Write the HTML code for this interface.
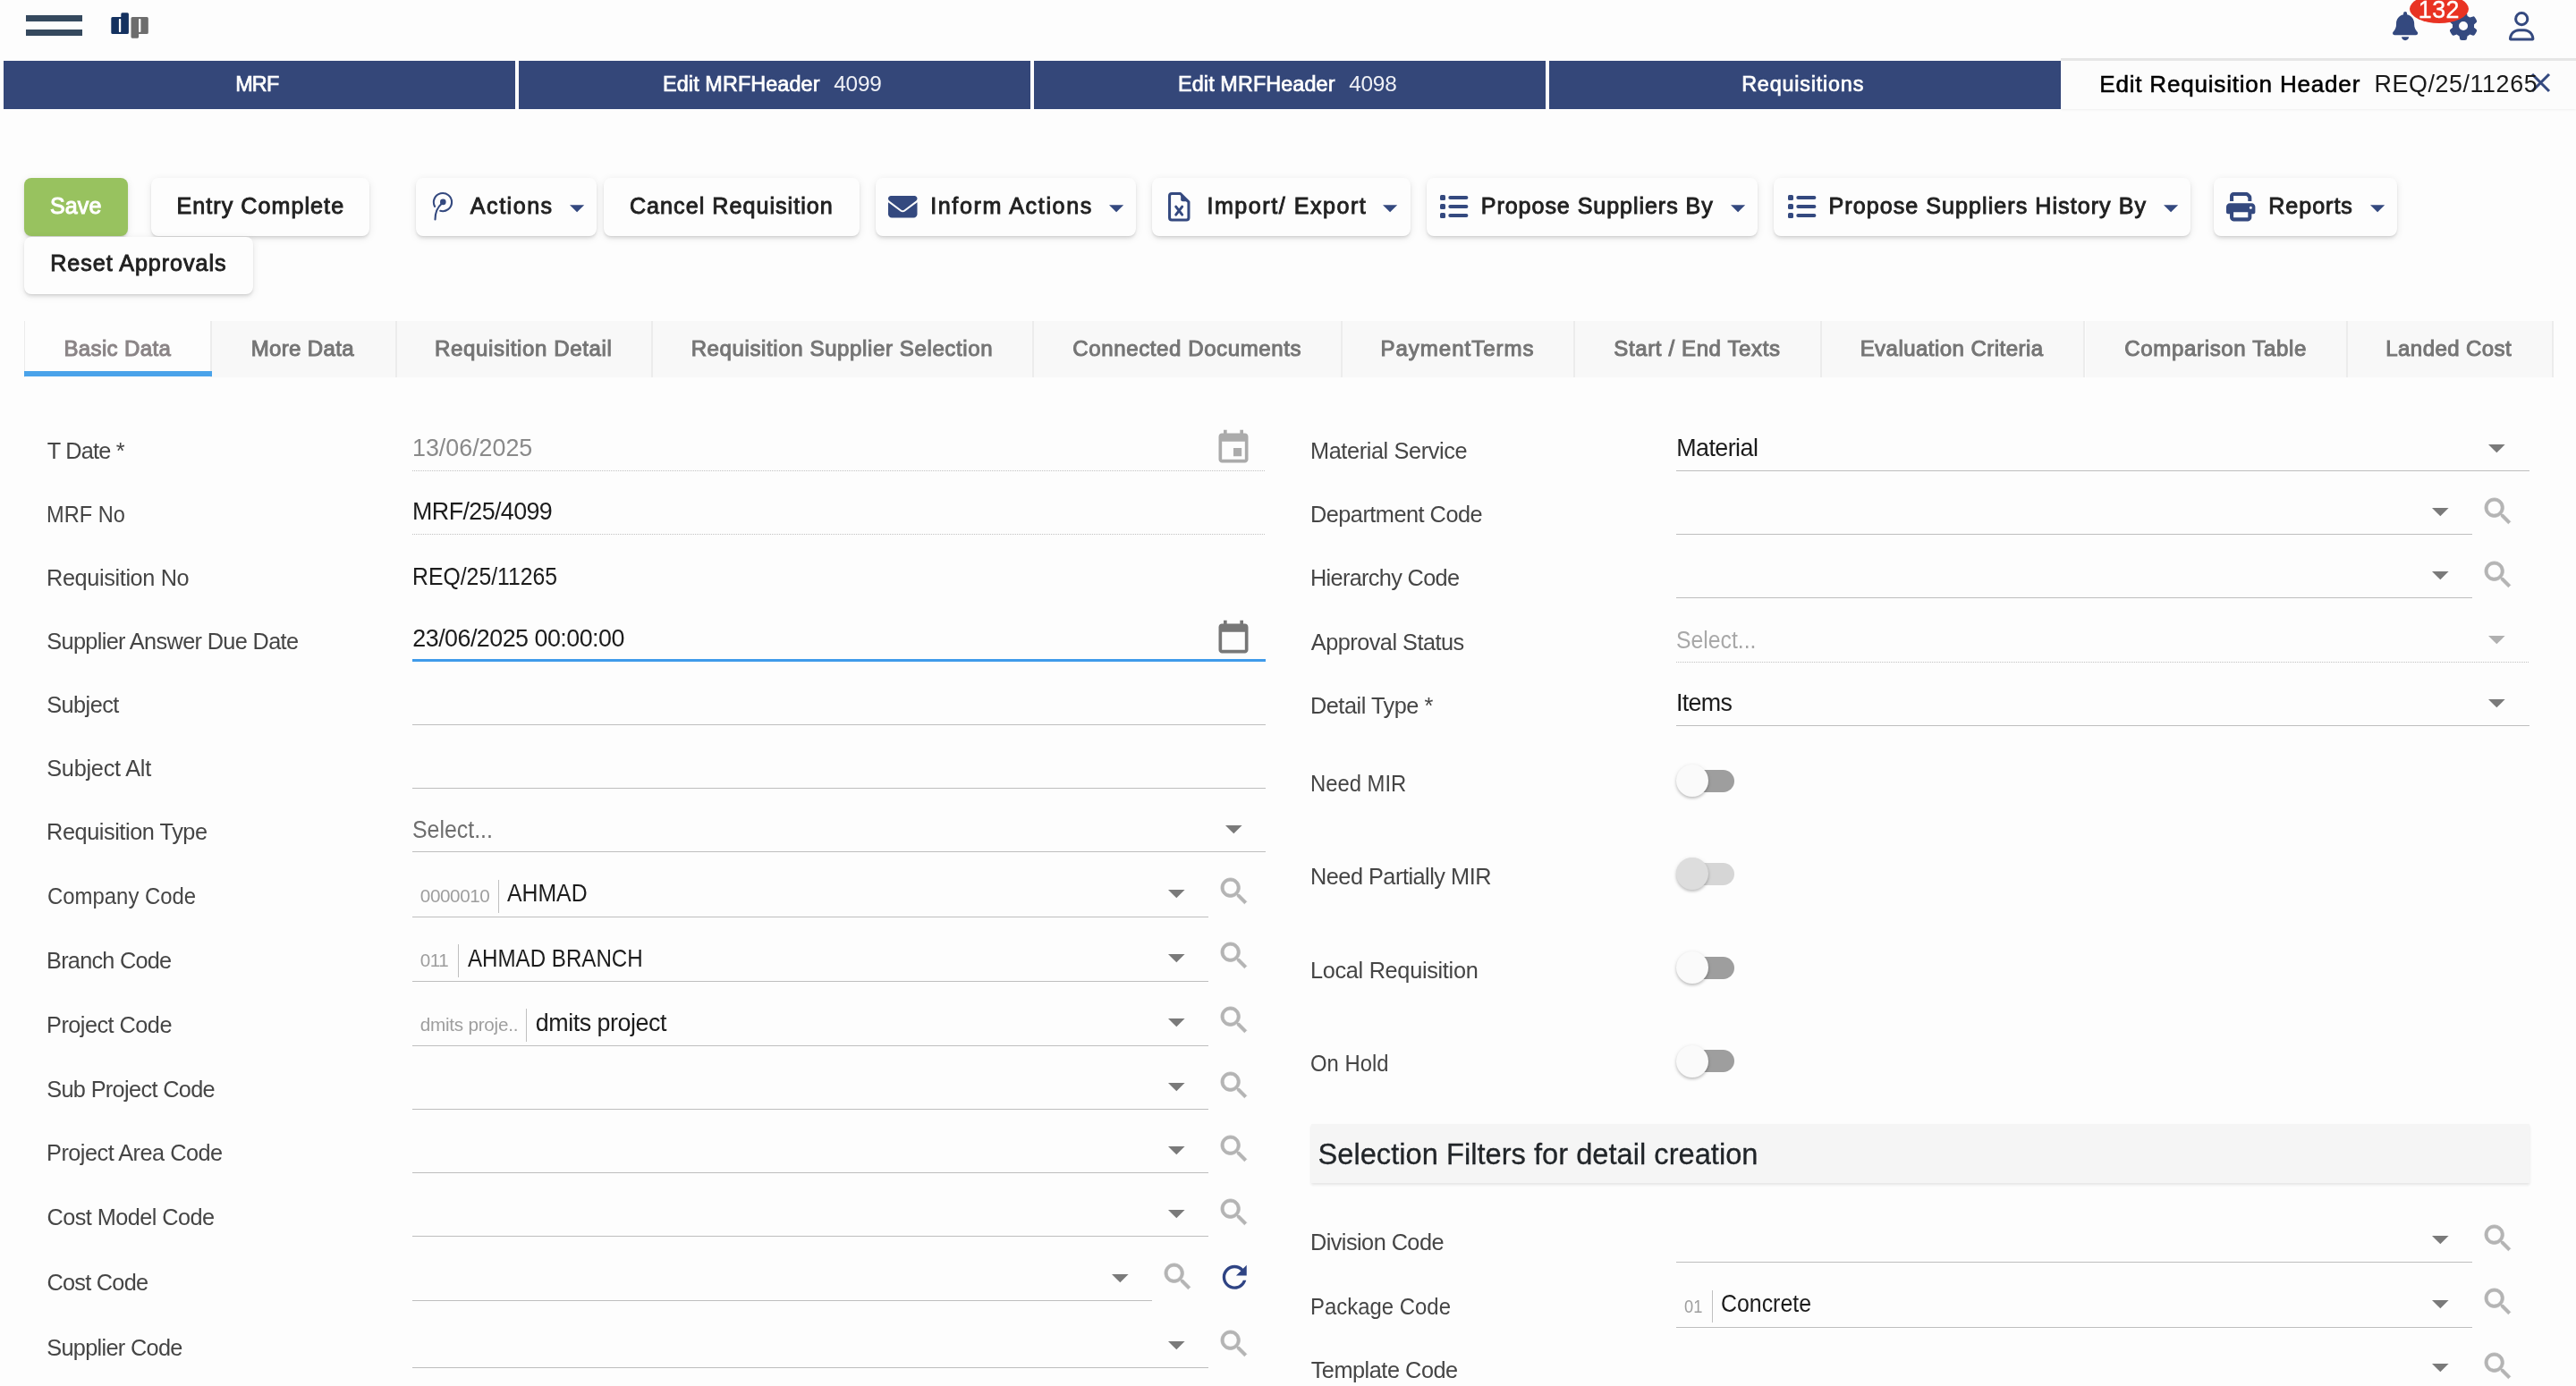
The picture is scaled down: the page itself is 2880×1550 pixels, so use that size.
<!DOCTYPE html>
<html lang="en">
<head>
<meta charset="utf-8">
<title>Edit Requisition Header</title>
<style>
html,body{margin:0;padding:0}
body{width:2880px;height:1550px;position:relative;overflow:hidden;background:#fdfdfd;font-family:"Liberation Sans",sans-serif}
.a{position:absolute}
.t{position:absolute;white-space:pre;line-height:60px;height:60px;font-family:"Liberation Sans",sans-serif}
.wt{position:absolute;top:68px;height:54px;background:#344779}
.btn{position:absolute;top:199px;height:65px;background:#fdfdfd;border-radius:8px;box-shadow:0 2px 10px rgba(0,0,0,.09),0 3px 3px rgba(0,0,0,.07),0 1px 1px rgba(0,0,0,.05)}
.st{position:absolute;top:359px;height:62.6px;background:#f8f8f8;border-right:2px solid #ececec;box-sizing:border-box}
.ul{position:absolute;height:1px;background:#bebebe}
.dl{position:absolute;height:1px;background:repeating-linear-gradient(90deg,#c2c2c2 0,#c2c2c2 1px,transparent 1px,transparent 2px)}
.sep{position:absolute;width:1px;background:#c0c0c0}
svg{position:absolute;overflow:visible}
.tr{position:absolute;width:62px;height:25px;border-radius:13px;background:#9e9e9e}
.th{position:absolute;width:36px;height:36px;border-radius:50%;background:#fafafa;box-shadow:0 2px 3px rgba(0,0,0,.18),0 1px 5px rgba(0,0,0,.10)}
</style>
</head>
<body>
<div class="a" style="left:29px;top:17px;width:63px;height:7px;background:#35495e;"></div>
<div class="a" style="left:29px;top:33px;width:63px;height:7px;background:#35495e;"></div>
<svg style="left:124px;top:14px" width="44" height="30" viewBox="0 0 44 30" ><path d="M1.8 5H11.300V1.800Q11.300 .3 12.800 .3H18.400Q19.900 .3 19.900 1.800V22.400Q19.900 24.100 18.200 24.100H2Q.3 24.100 .3 22.400V6.500Q.3 5 1.800 5Z" fill="#14315f"/><rect x="8.9" y="6.900" width="2.300" height="15.100" rx=".8" fill="#fff"/><path d="M24 5H40.300Q41.800 5 41.800 6.500V22.400Q41.800 24.100 40.100 24.100H31.100V27.300Q31.100 28.700 29.700 28.700H23.900Q22.500 28.700 22.500 27.300V6.500Q22.500 5 24 5Z" fill="#6d6d6d"/><rect x="31.1" y="6.900" width="2.300" height="15.100" rx=".8" fill="#fff"/></svg>
<svg style="left:2675px;top:13px" width="28.2" height="32.2" viewBox="0 0 448 512" ><path d="M224 0c-17.7 0-32 14.3-32 32V51.2C119 66 64 130.6 64 208v18.800c0 47-17.300 92.400-48.500 127.600l-7.400 8.300c-8.400 9.400-10.400 22.900-5.300 34.400S19.400 416 32 416H416c12.600 0 24-7.400 29.200-18.900s3.100-25-5.300-34.400l-7.400-8.300C401.300 319.200 384 273.900 384 226.800V208c0-77.400-55-142-128-156.800V32c0-17.700-14.300-32-32-32zm45.300 493.300c12-12 18.700-28.300 18.700-45.300H224 160c0 17 6.700 33.300 18.700 45.300s28.300 18.700 45.300 18.700s33.300-6.700 45.300-18.700z" fill="#34497f"/></svg>
<svg style="left:2738.0px;top:13.0px" width="32.1" height="32.1" viewBox="0 0 512 512" ><path d="M495.9 166.6c3.2 8.7 .5 18.4-6.4 24.6l-43.3 39.4c1.1 8.3 1.7 16.8 1.7 25.400s-.6 17.100-1.700 25.400l43.300 39.400c6.900 6.200 9.600 15.900 6.400 24.600c-4.400 11.900-9.700 23.300-15.800 34.300l-4.700 8.100c-6.600 11-14 21.400-22.100 31.200c-5.900 7.200-15.700 9.600-24.500 6.800l-55.700-17.700c-13.400 10.300-28.200 18.900-44 25.400l-12.500 57.100c-2 9.100-9 16.300-18.200 17.800c-13.800 2.300-28 3.500-42.500 3.500s-28.700-1.200-42.500-3.500c-9.200-1.500-16.200-8.700-18.200-17.800l-12.500-57.100c-15.800-6.500-30.600-15.100-44-25.400L83.100 425.900c-8.800 2.800-18.600 .3-24.500-6.800c-8.100-9.800-15.500-20.200-22.100-31.200l-4.700-8.100c-6.100-11-11.400-22.400-15.800-34.300c-3.200-8.700-.5-18.400 6.400-24.600l43.300-39.400C64.600 273.100 64 264.600 64 256s.6-17.100 1.700-25.400L22.400 191.200c-6.900-6.200-9.600-15.900-6.400-24.600c4.400-11.900 9.700-23.300 15.800-34.300l4.700-8.100c6.600-11 14-21.400 22.100-31.200c5.900-7.200 15.700-9.600 24.500-6.800l55.700 17.700c13.400-10.300 28.200-18.900 44-25.400l12.500-57.100c2-9.100 9-16.300 18.200-17.800C227.300 1.200 241.500 0 256 0s28.700 1.200 42.500 3.500c9.200 1.500 16.200 8.700 18.200 17.800l12.500 57.100c15.800 6.500 30.600 15.100 44 25.400l55.700-17.700c8.800-2.800 18.600-.3 24.500 6.800c8.100 9.800 15.500 20.200 22.100 31.200l4.700 8.100c6.100 11 11.400 22.400 15.800 34.300zM256 336a80 80 0 1 0 0-160 80 80 0 1 0 0 160z" fill="#34497f"/></svg>
<div class="a" style="left:2694px;top:-6px;width:66px;height:32px;border-radius:50%;background:#e93323"></div>
<svg style="left:2804.8px;top:12.6px" width="28.4" height="32.5" viewBox="0 0 448 512" ><path d="M304 128a80 80 0 1 0 -160 0 80 80 0 1 0 160 0zM96 128a128 128 0 1 1 256 0A128 128 0 1 1 96 128zM49.3 464H398.7c-8.9-63.300-63.300-112-129-112H178.300c-65.700 0-120.100 48.700-129 112zM0 482.300C0 383.800 79.800 304 178.300 304h91.400C368.200 304 448 383.800 448 482.300c0 16.400-13.300 29.700-29.700 29.700H29.700C13.300 512 0 498.700 0 482.300z" fill="#34497f"/></svg>
<div class="wt" style="left:3.5px;width:572.5px"></div>
<div class="wt" style="left:579.6px;width:572.4px"></div>
<div class="wt" style="left:1155.6px;width:572.4000000000001px"></div>
<div class="wt" style="left:1731.6px;width:572.4000000000001px"></div>
<div class="a" style="left:2304px;top:65px;width:576px;height:57px;background:#fcfcfc;border-top:3px solid #e6e6e6;box-sizing:border-box;box-shadow:0 1px 2px rgba(0,0,0,.06)"></div>
<svg style="left:2829.7px;top:82.4px" width="21" height="21" viewBox="0 0 21 21" ><path d="M1 1L20 20M20 1L1 20" stroke="#34497f" stroke-width="3.1" fill="none"/></svg>
<div class="btn" style="left:27px;width:116px;background:#98c25f"></div>
<div class="btn" style="left:169px;width:244px"></div>
<div class="btn" style="left:465px;width:202px"></div>
<div class="btn" style="left:675px;width:286px"></div>
<div class="btn" style="left:979px;width:291px"></div>
<div class="btn" style="left:1288px;width:289px"></div>
<div class="btn" style="left:1595px;width:370px"></div>
<div class="btn" style="left:1983px;width:466px"></div>
<div class="btn" style="left:2475px;width:205px"></div>
<div class="btn" style="left:27px;top:265px;width:256px;height:64px"></div>
<svg style="left:636.6px;top:228.8px" width="16.2" height="8.6" viewBox="0 0 10 5" ><path d="M0 0h10L5 5z" fill="#34497f"/></svg>
<svg style="left:1240px;top:228.8px" width="16.2" height="8.6" viewBox="0 0 10 5" ><path d="M0 0h10L5 5z" fill="#34497f"/></svg>
<svg style="left:1546.4px;top:228.8px" width="16.2" height="8.6" viewBox="0 0 10 5" ><path d="M0 0h10L5 5z" fill="#34497f"/></svg>
<svg style="left:1934.6px;top:228.8px" width="16.2" height="8.6" viewBox="0 0 10 5" ><path d="M0 0h10L5 5z" fill="#34497f"/></svg>
<svg style="left:2419px;top:228.8px" width="16.2" height="8.6" viewBox="0 0 10 5" ><path d="M0 0h10L5 5z" fill="#34497f"/></svg>
<svg style="left:2649.6px;top:228.8px" width="16.2" height="8.6" viewBox="0 0 10 5" ><path d="M0 0h10L5 5z" fill="#34497f"/></svg>
<svg style="left:480px;top:210px" width="30" height="40" viewBox="0 0 30 40" ><path d="M6.100 20.900A10.100 10.100 0 1 1 12.200 25.800" fill="none" stroke="#34497f" stroke-width="2.100" stroke-linecap="round"/><circle cx="15.300" cy="15.900" r="3.300" fill="#34497f"/><path d="M14 17.500Q6.500 24 6.500 35.400" fill="none" stroke="#34497f" stroke-width="2.100" stroke-linecap="round"/></svg>
<svg style="left:993px;top:215.0px" width="32.5" height="32.5" viewBox="0 0 512 512" ><path d="M48 64C21.5 64 0 85.5 0 112c0 15.1 7.1 29.3 19.2 38.4L236.8 313.6c11.4 8.5 27 8.5 38.4 0L492.8 150.4c12.1-9.1 19.2-23.3 19.2-38.4c0-26.5-21.5-48-48-48L48 64zM0 176L0 384c0 35.3 28.7 64 64 64l384 0c35.3 0 64-28.700 64-64l0-208L294.4 339.2c-22.8 17.100-54 17.100-76.800 0L0 176z" fill="#34497f"/></svg>
<svg style="left:1306.3px;top:214.8px" width="24.5" height="32.6" viewBox="0 0 384 512" ><path d="M24 64a40 40 0 0 1 40-40H214L360 170V448a40 40 0 0 1-40 40H64a40 40 0 0 1-40-40Z" fill="none" stroke="#34497f" stroke-width="48" stroke-linejoin="round"/><path d="M222 24V128a34 34 0 0 0 34 34H360Z" fill="#34497f"/><path d="M136 254L246 394M246 254L136 394" stroke="#34497f" stroke-width="46" stroke-linecap="round" fill="none"/></svg>
<svg style="left:1610.2px;top:217.9px" width="32" height="27" viewBox="0 0 32 27" ><rect x="0" y="0" width="6" height="6" rx="1.500" fill="#34497f"/><rect x="9.3" y="1" width="22.100" height="4" rx="2" fill="#34497f"/><rect x="0" y="10" width="6" height="6" rx="1.500" fill="#34497f"/><rect x="9.3" y="11" width="22.100" height="4" rx="2" fill="#34497f"/><rect x="0" y="20.1" width="6" height="6" rx="1.500" fill="#34497f"/><rect x="9.3" y="21.1" width="22.100" height="4" rx="2" fill="#34497f"/></svg>
<svg style="left:1998.9px;top:217.9px" width="32" height="27" viewBox="0 0 32 27" ><rect x="0" y="0" width="6" height="6" rx="1.500" fill="#34497f"/><rect x="9.3" y="1" width="22.100" height="4" rx="2" fill="#34497f"/><rect x="0" y="10" width="6" height="6" rx="1.500" fill="#34497f"/><rect x="9.3" y="11" width="22.100" height="4" rx="2" fill="#34497f"/><rect x="0" y="20.1" width="6" height="6" rx="1.500" fill="#34497f"/><rect x="9.3" y="21.1" width="22.100" height="4" rx="2" fill="#34497f"/></svg>
<svg style="left:2489px;top:214.5px" width="32.4" height="32.4" viewBox="0 0 512 512" ><path d="M128 0C92.7 0 64 28.7 64 64v96h64V64H354.7L384 93.3V160h64V93.3c0-17-6.7-33.300-18.700-45.300L400 18.700C388 6.700 371.700 0 354.700 0H128zM384 352v32 64H128V384 368 352H384zm64 32h32c17.700 0 32-14.300 32-32V256c0-35.300-28.700-64-64-64H64c-35.300 0-64 28.700-64 64v96c0 17.700 14.300 32 32 32H64v64c0 35.300 28.700 64 64 64H384c35.300 0 64-28.700 64-64V384zM432 248a24 24 0 1 1 0 48 24 24 0 1 1 0-48z" fill="#34497f"/></svg>
<div class="st" style="left:27px;width:210.2px;background:#fdfdfd;border-left:1px solid #ececec"></div>
<div class="a" style="left:27px;top:415px;width:210.2px;height:6px;background:#4aa3ea;"></div>
<div class="st" style="left:237.2px;width:206.7px"></div>
<div class="st" style="left:443.9px;width:285.70000000000005px"></div>
<div class="st" style="left:729.6px;width:426.19999999999993px"></div>
<div class="st" style="left:1155.8px;width:345.10000000000014px"></div>
<div class="st" style="left:1500.9px;width:260.0px"></div>
<div class="st" style="left:1760.9px;width:275.6999999999998px"></div>
<div class="st" style="left:2036.6px;width:294.9000000000001px"></div>
<div class="st" style="left:2331.5px;width:293.5px"></div>
<div class="st" style="left:2625px;width:230px"></div>
<div class="dl" style="left:461px;width:954px;top:526px"></div>
<div class="dl" style="left:461px;width:954px;top:597px"></div>
<div class="a" style="left:461px;top:737px;width:954px;height:3px;background:#3f9bea;"></div>
<div class="ul" style="left:461px;width:954px;top:810px"></div>
<div class="ul" style="left:461px;width:954px;top:881px"></div>
<div class="ul" style="left:461px;width:954px;top:952px"></div>
<div class="ul" style="left:461px;width:890px;top:1025px"></div>
<svg style="left:1306px;top:994.8000000000001px" width="18.6" height="9.4" viewBox="0 0 10 5" ><path d="M0 0h10L5 5z" fill="#7a7a7a"/></svg>
<svg style="left:1360.42px;top:977.32px" width="39.6" height="39.6" viewBox="0 0 24 24" ><path d="M15.5 14h-.79l-.28-.27C15.41 12.59 16 11.11 16 9.5 16 5.910 13.090 3 9.5 3S3 5.910 3 9.5 5.910 16 9.5 16c1.610 0 3.090-.59 4.230-1.570l.27.28v.79l5 4.990L20.490 19l-4.990-5zm-6 0C7.010 14 5 11.990 5 9.5S7.010 5 9.5 5 14 7.010 14 9.5 11.990 14 9.5 14z" fill="#b4b4b4" stroke="#b4b4b4" stroke-width="0.45" stroke-linejoin="round"/></svg>
<div class="ul" style="left:461px;width:890px;top:1097px"></div>
<svg style="left:1306px;top:1066.8000000000002px" width="18.6" height="9.4" viewBox="0 0 10 5" ><path d="M0 0h10L5 5z" fill="#7a7a7a"/></svg>
<svg style="left:1360.42px;top:1049.32px" width="39.6" height="39.6" viewBox="0 0 24 24" ><path d="M15.5 14h-.79l-.28-.27C15.41 12.59 16 11.11 16 9.5 16 5.910 13.090 3 9.5 3S3 5.910 3 9.5 5.910 16 9.5 16c1.610 0 3.090-.59 4.230-1.570l.27.28v.79l5 4.990L20.490 19l-4.990-5zm-6 0C7.010 14 5 11.990 5 9.5S7.010 5 9.5 5 14 7.010 14 9.5 11.990 14 9.5 14z" fill="#b4b4b4" stroke="#b4b4b4" stroke-width="0.45" stroke-linejoin="round"/></svg>
<div class="ul" style="left:461px;width:890px;top:1169px"></div>
<svg style="left:1306px;top:1138.8000000000002px" width="18.6" height="9.4" viewBox="0 0 10 5" ><path d="M0 0h10L5 5z" fill="#7a7a7a"/></svg>
<svg style="left:1360.42px;top:1121.32px" width="39.6" height="39.6" viewBox="0 0 24 24" ><path d="M15.5 14h-.79l-.28-.27C15.41 12.59 16 11.11 16 9.5 16 5.910 13.090 3 9.5 3S3 5.910 3 9.5 5.910 16 9.5 16c1.610 0 3.090-.59 4.230-1.570l.27.28v.79l5 4.990L20.490 19l-4.990-5zm-6 0C7.010 14 5 11.990 5 9.5S7.010 5 9.5 5 14 7.010 14 9.5 11.990 14 9.5 14z" fill="#b4b4b4" stroke="#b4b4b4" stroke-width="0.45" stroke-linejoin="round"/></svg>
<div class="ul" style="left:461px;width:890px;top:1240px"></div>
<svg style="left:1306px;top:1211.0px" width="18.6" height="9.4" viewBox="0 0 10 5" ><path d="M0 0h10L5 5z" fill="#7a7a7a"/></svg>
<svg style="left:1360.42px;top:1194.42px" width="39.6" height="39.6" viewBox="0 0 24 24" ><path d="M15.5 14h-.79l-.28-.27C15.41 12.59 16 11.11 16 9.5 16 5.910 13.090 3 9.5 3S3 5.910 3 9.5 5.910 16 9.5 16c1.610 0 3.090-.59 4.230-1.570l.27.28v.79l5 4.990L20.490 19l-4.990-5zm-6 0C7.010 14 5 11.990 5 9.5S7.010 5 9.5 5 14 7.010 14 9.5 11.990 14 9.5 14z" fill="#b4b4b4" stroke="#b4b4b4" stroke-width="0.45" stroke-linejoin="round"/></svg>
<div class="ul" style="left:461px;width:890px;top:1311px"></div>
<svg style="left:1306px;top:1282.0px" width="18.6" height="9.4" viewBox="0 0 10 5" ><path d="M0 0h10L5 5z" fill="#7a7a7a"/></svg>
<svg style="left:1360.42px;top:1265.42px" width="39.6" height="39.6" viewBox="0 0 24 24" ><path d="M15.5 14h-.79l-.28-.27C15.41 12.59 16 11.11 16 9.5 16 5.910 13.090 3 9.5 3S3 5.910 3 9.5 5.910 16 9.5 16c1.610 0 3.090-.59 4.230-1.570l.27.28v.79l5 4.990L20.490 19l-4.990-5zm-6 0C7.010 14 5 11.990 5 9.5S7.010 5 9.5 5 14 7.010 14 9.5 11.990 14 9.5 14z" fill="#b4b4b4" stroke="#b4b4b4" stroke-width="0.45" stroke-linejoin="round"/></svg>
<div class="ul" style="left:461px;width:890px;top:1382px"></div>
<svg style="left:1306px;top:1353.0px" width="18.6" height="9.4" viewBox="0 0 10 5" ><path d="M0 0h10L5 5z" fill="#7a7a7a"/></svg>
<svg style="left:1360.42px;top:1336.42px" width="39.6" height="39.6" viewBox="0 0 24 24" ><path d="M15.5 14h-.79l-.28-.27C15.41 12.59 16 11.11 16 9.5 16 5.910 13.090 3 9.5 3S3 5.910 3 9.5 5.910 16 9.5 16c1.610 0 3.090-.59 4.230-1.570l.27.28v.79l5 4.990L20.490 19l-4.990-5zm-6 0C7.010 14 5 11.990 5 9.5S7.010 5 9.5 5 14 7.010 14 9.5 11.990 14 9.5 14z" fill="#b4b4b4" stroke="#b4b4b4" stroke-width="0.45" stroke-linejoin="round"/></svg>
<div class="ul" style="left:461px;width:890px;top:1529px"></div>
<svg style="left:1306px;top:1500.0px" width="18.6" height="9.4" viewBox="0 0 10 5" ><path d="M0 0h10L5 5z" fill="#7a7a7a"/></svg>
<svg style="left:1360.42px;top:1483.42px" width="39.6" height="39.6" viewBox="0 0 24 24" ><path d="M15.5 14h-.79l-.28-.27C15.41 12.59 16 11.11 16 9.5 16 5.910 13.090 3 9.5 3S3 5.910 3 9.5 5.910 16 9.5 16c1.610 0 3.090-.59 4.230-1.570l.27.28v.79l5 4.990L20.490 19l-4.990-5zm-6 0C7.010 14 5 11.990 5 9.5S7.010 5 9.5 5 14 7.010 14 9.5 11.990 14 9.5 14z" fill="#b4b4b4" stroke="#b4b4b4" stroke-width="0.45" stroke-linejoin="round"/></svg>
<div class="ul" style="left:461px;width:827px;top:1454px"></div>
<svg style="left:1242.8px;top:1425px" width="18.6" height="9.4" viewBox="0 0 10 5" ><path d="M0 0h10L5 5z" fill="#7a7a7a"/></svg>
<svg style="left:1297.22px;top:1408.42px" width="39.6" height="39.6" viewBox="0 0 24 24" ><path d="M15.5 14h-.79l-.28-.27C15.41 12.59 16 11.11 16 9.5 16 5.910 13.090 3 9.5 3S3 5.910 3 9.5 5.910 16 9.5 16c1.610 0 3.090-.59 4.230-1.570l.27.28v.79l5 4.990L20.490 19l-4.990-5zm-6 0C7.010 14 5 11.990 5 9.5S7.010 5 9.5 5 14 7.010 14 9.5 11.990 14 9.5 14z" fill="#b4b4b4" stroke="#b4b4b4" stroke-width="0.45" stroke-linejoin="round"/></svg>
<svg style="left:1360.23px;top:1407.85px" width="40.5" height="40.5" viewBox="0 0 24 24" ><path d="M17.65 6.35C16.2 4.9 14.21 4 12 4c-4.42 0-7.99 3.58-7.99 8s3.570 8 7.990 8c3.730 0 6.840-2.550 7.730-6h-2.080c-.82 2.330-3.040 4-5.650 4-3.310 0-6-2.690-6-6s2.690-6 6-6c1.660 0 3.140.69 4.220 1.780L13 11h7V4l-2.350 2.350z" fill="#2f4484"/></svg>
<svg style="left:1369.6px;top:922.7px" width="18.6" height="9.4" viewBox="0 0 10 5" ><path d="M0 0h10L5 5z" fill="#7a7a7a"/></svg>
<svg style="left:1357.0px;top:478.97px" width="44.0" height="44.0" viewBox="0 0 24 24" ><path d="M17 12h-5v5h5v-5zM16 1v2H8V1H6v2H5c-1.110 0-1.990.9-1.990 2L3 19c0 1.100.89 2 2 2h14c1.100 0 2-.9 2-2V5c0-1.100-.9-2-2-2h-1V1h-2zm3 18H5V8h14v11z" fill="#ababab"/></svg>
<svg style="left:1357.0px;top:691.97px" width="44.0" height="44.0" viewBox="0 0 24 24" ><path d="M16 1v2H8V1H6v2H5c-1.110 0-1.990.9-1.990 2L3 19c0 1.100.89 2 2 2h14c1.100 0 2-.9 2-2V5c0-1.100-.9-2-2-2h-1V1h-2zm3 18H5V8h14v11z" fill="#777777"/></svg>
<div class="sep" style="left:557px;top:984px;height:37px"></div>
<div class="sep" style="left:512px;top:1056px;height:37px"></div>
<div class="sep" style="left:588px;top:1128px;height:37px"></div>
<div class="ul" style="left:1874px;width:954px;top:526px"></div>
<svg style="left:2782.4px;top:496.9px" width="18.6" height="9.4" viewBox="0 0 10 5" ><path d="M0 0h10L5 5z" fill="#7a7a7a"/></svg>
<div class="ul" style="left:1874px;width:890px;top:597px"></div>
<svg style="left:2719px;top:567.9px" width="18.6" height="9.4" viewBox="0 0 10 5" ><path d="M0 0h10L5 5z" fill="#7a7a7a"/></svg>
<svg style="left:2773.42px;top:551.52px" width="39.6" height="39.6" viewBox="0 0 24 24" ><path d="M15.5 14h-.79l-.28-.27C15.41 12.59 16 11.11 16 9.5 16 5.910 13.090 3 9.5 3S3 5.910 3 9.5 5.910 16 9.5 16c1.610 0 3.090-.59 4.230-1.570l.27.28v.79l5 4.990L20.490 19l-4.990-5zm-6 0C7.010 14 5 11.990 5 9.5S7.010 5 9.5 5 14 7.010 14 9.5 11.990 14 9.5 14z" fill="#b4b4b4" stroke="#b4b4b4" stroke-width="0.45" stroke-linejoin="round"/></svg>
<div class="ul" style="left:1874px;width:890px;top:668px"></div>
<svg style="left:2719px;top:638.9px" width="18.6" height="9.4" viewBox="0 0 10 5" ><path d="M0 0h10L5 5z" fill="#7a7a7a"/></svg>
<svg style="left:2773.42px;top:622.52px" width="39.6" height="39.6" viewBox="0 0 24 24" ><path d="M15.5 14h-.79l-.28-.27C15.41 12.59 16 11.11 16 9.5 16 5.910 13.090 3 9.5 3S3 5.910 3 9.5 5.910 16 9.5 16c1.610 0 3.090-.59 4.230-1.570l.27.28v.79l5 4.990L20.490 19l-4.990-5zm-6 0C7.010 14 5 11.990 5 9.5S7.010 5 9.5 5 14 7.010 14 9.5 11.990 14 9.5 14z" fill="#b4b4b4" stroke="#b4b4b4" stroke-width="0.45" stroke-linejoin="round"/></svg>
<div class="dl" style="left:1874px;width:954px;top:740px"></div>
<svg style="left:2782.4px;top:710.8px" width="18.6" height="9.4" viewBox="0 0 10 5" ><path d="M0 0h10L5 5z" fill="#b0b0b0"/></svg>
<div class="ul" style="left:1874px;width:954px;top:811px"></div>
<svg style="left:2782.4px;top:781.9px" width="18.6" height="9.4" viewBox="0 0 10 5" ><path d="M0 0h10L5 5z" fill="#7a7a7a"/></svg>
<div class="tr" style="left:1877px;top:860.7px;background:#9e9e9e"></div>
<div class="th" style="left:1874px;top:855.2px;background:#fafafa"></div>
<div class="tr" style="left:1877px;top:964.9px;background:#d6d6d6"></div>
<div class="th" style="left:1874px;top:959.4px;background:#dddddd"></div>
<div class="tr" style="left:1877px;top:1069.8px;background:#9e9e9e"></div>
<div class="th" style="left:1874px;top:1064.3px;background:#fafafa"></div>
<div class="tr" style="left:1877px;top:1174.0px;background:#9e9e9e"></div>
<div class="th" style="left:1874px;top:1168.5px;background:#fafafa"></div>
<div class="a" style="left:1466px;top:1257px;width:1362px;height:66px;background:#f5f5f5;box-shadow:0 2px 3px rgba(0,0,0,.10)"></div>
<div class="ul" style="left:1874px;width:890px;top:1411px"></div>
<svg style="left:2719px;top:1382.0px" width="18.6" height="9.4" viewBox="0 0 10 5" ><path d="M0 0h10L5 5z" fill="#7a7a7a"/></svg>
<svg style="left:2773.42px;top:1365.42px" width="39.6" height="39.6" viewBox="0 0 24 24" ><path d="M15.5 14h-.79l-.28-.27C15.41 12.59 16 11.11 16 9.5 16 5.910 13.090 3 9.5 3S3 5.910 3 9.5 5.910 16 9.5 16c1.610 0 3.090-.59 4.230-1.570l.27.28v.79l5 4.990L20.490 19l-4.990-5zm-6 0C7.010 14 5 11.990 5 9.5S7.010 5 9.5 5 14 7.010 14 9.5 11.990 14 9.5 14z" fill="#b4b4b4" stroke="#b4b4b4" stroke-width="0.45" stroke-linejoin="round"/></svg>
<div class="ul" style="left:1874px;width:890px;top:1484px"></div>
<svg style="left:2719px;top:1453.8000000000002px" width="18.6" height="9.4" viewBox="0 0 10 5" ><path d="M0 0h10L5 5z" fill="#7a7a7a"/></svg>
<svg style="left:2773.42px;top:1436.32px" width="39.6" height="39.6" viewBox="0 0 24 24" ><path d="M15.5 14h-.79l-.28-.27C15.41 12.59 16 11.11 16 9.5 16 5.910 13.090 3 9.5 3S3 5.910 3 9.5 5.910 16 9.5 16c1.610 0 3.090-.59 4.230-1.570l.27.28v.79l5 4.990L20.490 19l-4.990-5zm-6 0C7.010 14 5 11.990 5 9.5S7.010 5 9.5 5 14 7.010 14 9.5 11.990 14 9.5 14z" fill="#b4b4b4" stroke="#b4b4b4" stroke-width="0.45" stroke-linejoin="round"/></svg>
<div class="ul" style="left:1874px;width:890px;top:1554px"></div>
<svg style="left:2719px;top:1525.0px" width="18.6" height="9.4" viewBox="0 0 10 5" ><path d="M0 0h10L5 5z" fill="#7a7a7a"/></svg>
<svg style="left:2773.42px;top:1508.42px" width="39.6" height="39.6" viewBox="0 0 24 24" ><path d="M15.5 14h-.79l-.28-.27C15.41 12.59 16 11.11 16 9.5 16 5.910 13.090 3 9.5 3S3 5.910 3 9.5 5.910 16 9.5 16c1.610 0 3.090-.59 4.230-1.570l.27.28v.79l5 4.990L20.490 19l-4.990-5zm-6 0C7.010 14 5 11.990 5 9.5S7.010 5 9.5 5 14 7.010 14 9.5 11.990 14 9.5 14z" fill="#b4b4b4" stroke="#b4b4b4" stroke-width="0.45" stroke-linejoin="round"/></svg>
<div class="sep" style="left:1914px;top:1443px;height:36px"></div>
<div class="a" style="left:0;top:0;width:2880px;height:1550px;will-change:transform">
<span class="t" style="left:263.17px;top:64px;color:#ffffff;font-size:23.36px;letter-spacing:-0.775px;font-weight:400;-webkit-text-stroke:0.7px currentColor;">MRF</span>
<span class="t" style="left:741.07px;top:64px;color:#ffffff;font-size:23.36px;letter-spacing:0.108px;font-weight:400;-webkit-text-stroke:0.7px currentColor;">Edit MRFHeader</span>
<span class="t" style="left:932.23px;top:64px;color:#eef0f6;font-size:24.38px;letter-spacing:-0.215px;font-weight:400;">4099</span>
<span class="t" style="left:1317.07px;top:64px;color:#ffffff;font-size:23.36px;letter-spacing:0.108px;font-weight:400;-webkit-text-stroke:0.7px currentColor;">Edit MRFHeader</span>
<span class="t" style="left:1508.23px;top:64px;color:#eef0f6;font-size:24.38px;letter-spacing:-0.240px;font-weight:400;">4098</span>
<span class="t" style="left:1947.17px;top:64px;color:#ffffff;font-size:23.36px;letter-spacing:0.813px;font-weight:400;-webkit-text-stroke:0.7px currentColor;">Requisitions</span>
<span class="t" style="left:2347.24px;top:64px;color:#000000;font-size:26.06px;letter-spacing:0.793px;font-weight:400;-webkit-text-stroke:0.55px currentColor;">Edit Requisition Header</span>
<span class="t" style="left:2654.48px;top:64px;color:#1a1a1a;font-size:26.86px;letter-spacing:0.584px;font-weight:400;">REQ/25/11265</span>
<span class="t" style="left:55.99px;top:200px;color:#ffffff;font-size:24.99px;letter-spacing:0.152px;font-weight:400;-webkit-text-stroke:1.0px currentColor;">Save</span>
<span class="t" style="left:197.38px;top:200px;color:#212121;font-size:25.14px;letter-spacing:1.044px;font-weight:400;-webkit-text-stroke:0.9px currentColor;">Entry Complete</span>
<span class="t" style="left:525.86px;top:200px;color:#212121;font-size:25.14px;letter-spacing:1.484px;font-weight:400;-webkit-text-stroke:0.9px currentColor;">Actions</span>
<span class="t" style="left:703.93px;top:200px;color:#212121;font-size:25.14px;letter-spacing:1.023px;font-weight:400;-webkit-text-stroke:0.9px currentColor;">Cancel Requisition</span>
<span class="t" style="left:1040.14px;top:200px;color:#212121;font-size:25.14px;letter-spacing:1.617px;font-weight:400;-webkit-text-stroke:0.9px currentColor;">Inform Actions</span>
<span class="t" style="left:1349.44px;top:200px;color:#212121;font-size:25.14px;letter-spacing:1.507px;font-weight:400;-webkit-text-stroke:0.9px currentColor;">Import/ Export</span>
<span class="t" style="left:1655.78px;top:200px;color:#212121;font-size:25.14px;letter-spacing:0.915px;font-weight:400;-webkit-text-stroke:0.9px currentColor;">Propose Suppliers By</span>
<span class="t" style="left:2044.58px;top:200px;color:#212121;font-size:25.14px;letter-spacing:1.024px;font-weight:400;-webkit-text-stroke:0.9px currentColor;">Propose Suppliers History By</span>
<span class="t" style="left:2536.18px;top:200px;color:#212121;font-size:25.14px;letter-spacing:0.959px;font-weight:400;-webkit-text-stroke:0.9px currentColor;">Reports</span>
<span class="t" style="left:56.28px;top:264px;color:#212121;font-size:25.14px;letter-spacing:0.954px;font-weight:400;-webkit-text-stroke:0.9px currentColor;">Reset Approvals</span>
<span class="t" style="left:71.43px;top:360px;color:#8a8486;font-size:24.06px;letter-spacing:0.352px;font-weight:400;-webkit-text-stroke:1.0px currentColor;">Basic Data</span>
<span class="t" style="left:280.63px;top:360px;color:#757575;font-size:24.06px;letter-spacing:0.334px;font-weight:400;-webkit-text-stroke:1.0px currentColor;">More Data</span>
<span class="t" style="left:486.03px;top:360px;color:#757575;font-size:24.06px;letter-spacing:0.634px;font-weight:400;-webkit-text-stroke:1.0px currentColor;">Requisition Detail</span>
<span class="t" style="left:772.63px;top:360px;color:#757575;font-size:24.06px;letter-spacing:0.602px;font-weight:400;-webkit-text-stroke:1.0px currentColor;">Requisition Supplier Selection</span>
<span class="t" style="left:1199.35px;top:360px;color:#757575;font-size:24.06px;letter-spacing:0.587px;font-weight:400;-webkit-text-stroke:1.0px currentColor;">Connected Documents</span>
<span class="t" style="left:1543.43px;top:360px;color:#757575;font-size:24.06px;letter-spacing:0.981px;font-weight:400;-webkit-text-stroke:1.0px currentColor;">PaymentTerms</span>
<span class="t" style="left:1804.35px;top:360px;color:#757575;font-size:24.06px;letter-spacing:0.603px;font-weight:400;-webkit-text-stroke:1.0px currentColor;">Start / End Texts</span>
<span class="t" style="left:2079.63px;top:360px;color:#757575;font-size:24.06px;letter-spacing:0.448px;font-weight:400;-webkit-text-stroke:1.0px currentColor;">Evaluation Criteria</span>
<span class="t" style="left:2375.15px;top:360px;color:#757575;font-size:24.06px;letter-spacing:0.661px;font-weight:400;-webkit-text-stroke:1.0px currentColor;">Comparison Table</span>
<span class="t" style="left:2667.33px;top:360px;color:#757575;font-size:24.06px;letter-spacing:0.398px;font-weight:400;-webkit-text-stroke:1.0px currentColor;">Landed Cost</span>
<span class="t" style="left:52.73px;top:474px;color:#454545;font-size:25.31px;letter-spacing:-0.774px;font-weight:400;">T Date *</span>
<span class="t" style="left:52.20px;top:545px;color:#454545;font-size:25.31px;letter-spacing:0.000px;font-weight:400;transform:scaleX(0.9331);transform-origin:0 50%;">MRF No</span>
<span class="t" style="left:52.06px;top:616px;color:#454545;font-size:25.31px;letter-spacing:-0.383px;font-weight:400;">Requisition No</span>
<span class="t" style="left:52.24px;top:687px;color:#454545;font-size:25.31px;letter-spacing:-0.647px;font-weight:400;">Supplier Answer Due Date</span>
<span class="t" style="left:52.24px;top:758px;color:#454545;font-size:25.31px;letter-spacing:-0.550px;font-weight:400;">Subject</span>
<span class="t" style="left:52.24px;top:829px;color:#454545;font-size:25.31px;letter-spacing:-0.256px;font-weight:400;">Subject Alt</span>
<span class="t" style="left:52.06px;top:900px;color:#454545;font-size:25.31px;letter-spacing:-0.437px;font-weight:400;">Requisition Type</span>
<span class="t" style="left:52.62px;top:972px;color:#454545;font-size:25.31px;letter-spacing:0.000px;font-weight:400;transform:scaleX(0.9453);transform-origin:0 50%;">Company Code</span>
<span class="t" style="left:52.06px;top:1044px;color:#454545;font-size:25.31px;letter-spacing:-0.755px;font-weight:400;">Branch Code</span>
<span class="t" style="left:52.06px;top:1116px;color:#454545;font-size:25.31px;letter-spacing:-0.528px;font-weight:400;">Project Code</span>
<span class="t" style="left:52.24px;top:1188px;color:#454545;font-size:25.31px;letter-spacing:-0.659px;font-weight:400;">Sub Project Code</span>
<span class="t" style="left:52.06px;top:1259px;color:#454545;font-size:25.31px;letter-spacing:-0.519px;font-weight:400;">Project Area Code</span>
<span class="t" style="left:52.55px;top:1331px;color:#454545;font-size:25.31px;letter-spacing:-0.567px;font-weight:400;">Cost Model Code</span>
<span class="t" style="left:52.55px;top:1404px;color:#454545;font-size:25.31px;letter-spacing:-0.755px;font-weight:400;">Cost Code</span>
<span class="t" style="left:52.24px;top:1477px;color:#454545;font-size:25.31px;letter-spacing:-0.682px;font-weight:400;">Supplier Code</span>
<span class="t" style="left:1464.96px;top:474px;color:#454545;font-size:25.31px;letter-spacing:-0.387px;font-weight:400;">Material Service</span>
<span class="t" style="left:1464.96px;top:545px;color:#454545;font-size:25.31px;letter-spacing:-0.503px;font-weight:400;">Department Code</span>
<span class="t" style="left:1464.96px;top:616px;color:#454545;font-size:25.31px;letter-spacing:-0.669px;font-weight:400;">Hierarchy Code</span>
<span class="t" style="left:1465.83px;top:688px;color:#454545;font-size:25.31px;letter-spacing:-0.519px;font-weight:400;">Approval Status</span>
<span class="t" style="left:1464.96px;top:759px;color:#454545;font-size:25.31px;letter-spacing:-0.472px;font-weight:400;">Detail Type *</span>
<span class="t" style="left:1465.08px;top:846px;color:#454545;font-size:25.31px;letter-spacing:0.000px;font-weight:400;transform:scaleX(0.9420);transform-origin:0 50%;">Need MIR</span>
<span class="t" style="left:1464.96px;top:950px;color:#454545;font-size:25.31px;letter-spacing:-0.493px;font-weight:400;">Need Partially MIR</span>
<span class="t" style="left:1464.96px;top:1055px;color:#454545;font-size:25.31px;letter-spacing:-0.304px;font-weight:400;">Local Requisition</span>
<span class="t" style="left:1465.10px;top:1159px;color:#454545;font-size:25.31px;letter-spacing:0.000px;font-weight:400;transform:scaleX(0.9424);transform-origin:0 50%;">On Hold</span>
<span class="t" style="left:1464.96px;top:1359px;color:#454545;font-size:25.31px;letter-spacing:-0.545px;font-weight:400;">Division Code</span>
<span class="t" style="left:1465.07px;top:1431px;color:#454545;font-size:25.31px;letter-spacing:0.000px;font-weight:400;transform:scaleX(0.9457);transform-origin:0 50%;">Package Code</span>
<span class="t" style="left:1465.63px;top:1502px;color:#454545;font-size:25.31px;letter-spacing:-0.467px;font-weight:400;">Template Code</span>
<span class="t" style="left:461.04px;top:471px;color:#8a8a8a;font-size:26.86px;letter-spacing:-0.022px;font-weight:400;">13/06/2025</span>
<span class="t" style="left:461.08px;top:542px;color:#1c1c1c;font-size:26.86px;letter-spacing:-0.605px;font-weight:400;">MRF/25/4099</span>
<span class="t" style="left:461.05px;top:615px;color:#1c1c1c;font-size:26.86px;letter-spacing:0.000px;font-weight:400;transform:scaleX(0.9229);transform-origin:0 50%;">REQ/25/11265</span>
<span class="t" style="left:461.34px;top:684px;color:#1c1c1c;font-size:26.86px;letter-spacing:-0.522px;font-weight:400;">23/06/2025 00:00:00</span>
<span class="t" style="left:460.92px;top:898px;color:#6e6e6e;font-size:26.86px;letter-spacing:0.000px;font-weight:400;transform:scaleX(0.9268);transform-origin:0 50%;">Select...</span>
<span class="t" style="left:469.84px;top:972px;color:#9e9e9e;font-size:20.66px;letter-spacing:-0.410px;font-weight:400;">0000010</span>
<span class="t" style="left:567.15px;top:969px;color:#1c1c1c;font-size:26.86px;letter-spacing:0.000px;font-weight:400;transform:scaleX(0.9235);transform-origin:0 50%;">AHMAD</span>
<span class="t" style="left:469.84px;top:1044px;color:#9e9e9e;font-size:20.66px;letter-spacing:-0.561px;font-weight:400;">011</span>
<span class="t" style="left:522.76px;top:1042px;color:#1c1c1c;font-size:26.86px;letter-spacing:0.000px;font-weight:400;transform:scaleX(0.8982);transform-origin:0 50%;">AHMAD BRANCH</span>
<span class="t" style="left:469.70px;top:1116px;color:#9e9e9e;font-size:20.66px;letter-spacing:-0.233px;font-weight:400;">dmits proje..</span>
<span class="t" style="left:598.82px;top:1114px;color:#1c1c1c;font-size:26.86px;letter-spacing:-0.477px;font-weight:400;">dmits project</span>
<span class="t" style="left:1874.28px;top:471px;color:#1c1c1c;font-size:26.86px;letter-spacing:-0.561px;font-weight:400;">Material</span>
<span class="t" style="left:1873.92px;top:686px;color:#a8a8a8;font-size:26.86px;letter-spacing:0.000px;font-weight:400;transform:scaleX(0.9214);transform-origin:0 50%;">Select...</span>
<span class="t" style="left:1874.00px;top:756px;color:#1c1c1c;font-size:26.86px;letter-spacing:-0.686px;font-weight:400;">Items</span>
<span class="t" style="left:1883.04px;top:1431px;color:#9e9e9e;font-size:20.66px;letter-spacing:0.000px;font-weight:400;transform:scaleX(0.8854);transform-origin:0 50%;">01</span>
<span class="t" style="left:1924.10px;top:1428px;color:#1c1c1c;font-size:26.86px;letter-spacing:0.000px;font-weight:400;transform:scaleX(0.9266);transform-origin:0 50%;">Concrete</span>
<span class="t" style="left:1473.51px;top:1261px;color:#212529;font-size:32.62px;letter-spacing:0.023px;font-weight:400;-webkit-text-stroke:0.3px currentColor;">Selection Filters for detail creation</span>
<span class="t" style="left:2703.76px;top:-19px;color:#ffffff;font-size:26.79px;letter-spacing:0.529px;font-weight:400;-webkit-text-stroke:0.4px currentColor;">132</span>
</div>
</body>
</html>
